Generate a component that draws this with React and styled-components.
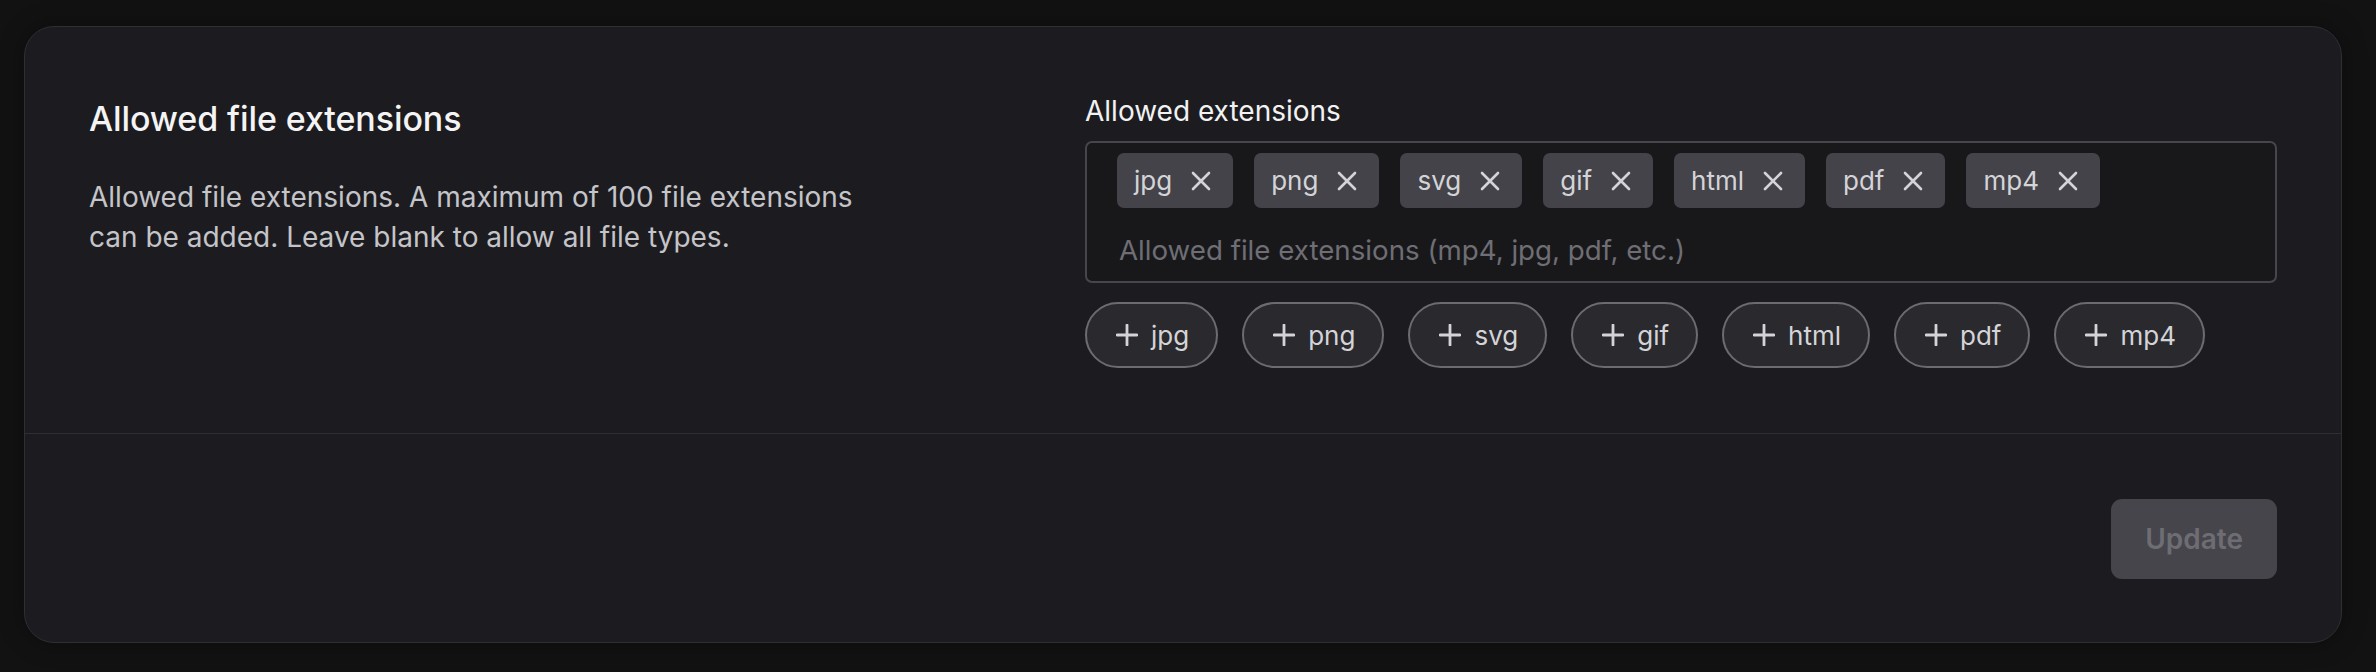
import styled, { createGlobalStyle } from "styled-components";

const GlobalStyle = createGlobalStyle`
  * { box-sizing: border-box; }
  body {
    margin: 0;
    background: #121213;
    font-family: Inter, "Noto Sans", sans-serif;
  }
`;

const Page = styled.div`
  padding: 26px 34px 29px 24px;
`;

const Card = styled.section`
  background: #1c1c20;
  border: 1px solid #2e2e33;
  border-radius: 30px;
  box-shadow: 0 0 24px rgba(0, 0, 0, 0.35);
  overflow: hidden;
`;

const Body = styled.div`
  display: flex;
  justify-content: space-between;
  padding: 64px 64px 65px;
`;

const Intro = styled.div`
  width: 800px;
  padding-top: 8px;
`;

const Title = styled.h2`
  margin: 0;
  font-size: 34px;
  line-height: 40px;
  font-weight: 500;
  letter-spacing: -0.1px;
  color: #f4f4f5;
`;

const Description = styled.p`
  margin: 38px 0 0;
  font-size: 28px;
  line-height: 40px;
  color: #c4c4c9;
`;

const Field = styled.div`
  width: 1192px;
  display: flex;
  flex-direction: column;
`;

const Label = styled.label`
  font-size: 28px;
  line-height: 40px;
  font-weight: 400;
  color: #f2f2f3;
`;

const TagBox = styled.div`
  margin-top: 10px;
  display: flex;
  flex-wrap: wrap;
  gap: 20px 21px;
  padding: 10px 30px;
  background: #18181b;
  border: 2px solid #46464c;
  border-radius: 7px;
`;

const Tag = styled.span`
  display: inline-flex;
  align-items: center;
  gap: 19px;
  height: 55px;
  padding: 0 22px 0 17px;
  background: #434349;
  border-radius: 7px;
  font-size: 26px;
  color: #d4d4d8;
`;

const TagInput = styled.input`
  flex: 1 0 100%;
  height: 43px;
  padding: 0 2px;
  border: none;
  outline: none;
  background: transparent;
  font-family: inherit;
  font-size: 27.7px;
  color: #e4e4e7;

  &::placeholder {
    color: #6e6e74;
  }
`;

const Suggestions = styled.div`
  margin-top: 19px;
  display: flex;
  gap: 24px;
`;

const AddPill = styled.button`
  display: inline-flex;
  align-items: center;
  gap: 13px;
  height: 66px;
  padding: 0 27px 0 29px;
  background: #2a2a2e;
  border: 2px solid #6b6b71;
  border-radius: 999px;
  font-family: inherit;
  font-size: 26px;
  color: #d4d4d8;
  cursor: pointer;
`;

const Footer = styled.div`
  display: flex;
  justify-content: flex-end;
  padding: 65px 64px 63px;
  border-top: 1px solid #2e2e33;
`;

const UpdateButton = styled.button`
  height: 80px;
  padding: 0 34px;
  border: none;
  border-radius: 11px;
  background: #45454b;
  font-family: inherit;
  font-size: 28px;
  font-weight: 600;
  color: #6d6d73;
  cursor: not-allowed;
`;

function CloseIcon() {
  return (
    <svg width="20" height="20" viewBox="0 0 20 20" fill="none">
      <path d="M2 2L18 18M18 2L2 18" stroke="#d4d4d8" strokeWidth="2.6" strokeLinecap="round" />
    </svg>
  );
}

function PlusIcon() {
  return (
    <svg width="22" height="22" viewBox="0 0 22 22" fill="none">
      <path d="M11 1V21M1 11H21" stroke="#d4d4d8" strokeWidth="2.8" strokeLinecap="round" />
    </svg>
  );
}

const extensions = ["jpg", "png", "svg", "gif", "html", "pdf", "mp4"];

export default function App() {
  return (
    <Page>
      <GlobalStyle />
      <Card>
        <Body>
          <Intro>
            <Title>Allowed file extensions</Title>
            <Description>
              Allowed file extensions. A maximum of 100 file extensions can be added. Leave blank to
              allow all file types.
            </Description>
          </Intro>
          <Field>
            <Label htmlFor="ext">Allowed extensions</Label>
            <TagBox>
              {extensions.map((ext) => (
                <Tag key={ext}>
                  {ext}
                  <CloseIcon />
                </Tag>
              ))}
              <TagInput id="ext" placeholder="Allowed file extensions (mp4, jpg, pdf, etc.)" />
            </TagBox>
            <Suggestions>
              {extensions.map((ext) => (
                <AddPill key={ext}>
                  <PlusIcon />
                  {ext}
                </AddPill>
              ))}
            </Suggestions>
          </Field>
        </Body>
        <Footer>
          <UpdateButton disabled>Update</UpdateButton>
        </Footer>
      </Card>
    </Page>
  );
}
